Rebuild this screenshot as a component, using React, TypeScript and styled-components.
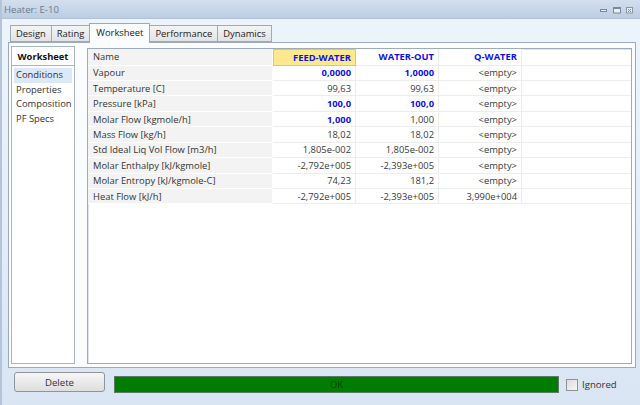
import styled, { createGlobalStyle } from 'styled-components';

const GlobalStyle = createGlobalStyle`
    html, body {
        margin: 0;
        padding: 0;
        background: #dae5f3;
    }
    * {
        box-sizing: border-box;
    }
`;

type Cell = { text: string; spec?: boolean };
type Row = { name: string; cells: Cell[] };

const tabs = ['Design', 'Rating', 'Worksheet', 'Performance', 'Dynamics'];
const navItems = ['Conditions', 'Properties', 'Composition', 'PF Specs'];
const streams = ['FEED-WATER', 'WATER-OUT', 'Q-WATER'];

const rows: Row[] = [
    { name: 'Vapour', cells: [{ text: '0,0000', spec: true }, { text: '1,0000', spec: true }, { text: '<empty>' }] },
    { name: 'Temperature [C]', cells: [{ text: '99,63' }, { text: '99,63' }, { text: '<empty>' }] },
    { name: 'Pressure [kPa]', cells: [{ text: '100,0', spec: true }, { text: '100,0', spec: true }, { text: '<empty>' }] },
    { name: 'Molar Flow [kgmole/h]', cells: [{ text: '1,000', spec: true }, { text: '1,000' }, { text: '<empty>' }] },
    { name: 'Mass Flow [kg/h]', cells: [{ text: '18,02' }, { text: '18,02' }, { text: '<empty>' }] },
    { name: 'Std Ideal Liq Vol Flow [m3/h]', cells: [{ text: '1,805e-002' }, { text: '1,805e-002' }, { text: '<empty>' }] },
    { name: 'Molar Enthalpy [kJ/kgmole]', cells: [{ text: '-2,792e+005' }, { text: '-2,393e+005' }, { text: '<empty>' }] },
    { name: 'Molar Entropy [kJ/kgmole-C]', cells: [{ text: '74,23' }, { text: '181,2' }, { text: '<empty>' }] },
    { name: 'Heat Flow [kJ/h]', cells: [{ text: '-2,792e+005' }, { text: '-2,393e+005' }, { text: '3,990e+004' }] },
];

export default function App() {
    return (
        <>
            <GlobalStyle />
            <Window>
                <TitleBar>
                    <Title>Heater: E-10</Title>
                    <Controls>
                        <svg width="8" height="8" viewBox="0 0 8 8">
                            <rect x="0.5" y="3.5" width="6" height="2" fill="#e9eef4" stroke="#7d8896" />
                        </svg>
                        <svg width="8" height="8" viewBox="0 0 8 8">
                            <rect x="0.5" y="1.5" width="7" height="5.5" fill="#e9eef4" stroke="#7d8896" />
                            <rect x="0.5" y="1.5" width="7" height="1.5" fill="#7d8896" />
                        </svg>
                        <svg width="8" height="8" viewBox="0 0 8 8">
                            <rect x="0.5" y="1.5" width="6" height="5.5" fill="#e9eef4" stroke="#8a95a3" />
                            <path d="M2 3 L5 6 M5 3 L2 6" stroke="#7d8896" strokeWidth="1" />
                        </svg>
                    </Controls>
                </TitleBar>
                <Body>
                    <TabStrip>
                        {tabs.map((t) => (
                            <Tab key={t} $active={t === 'Worksheet'}>{t}</Tab>
                        ))}
                    </TabStrip>
                    <TabPanel>
                        <Nav>
                            <NavHeader>Worksheet</NavHeader>
                            <NavList>
                                {navItems.map((n) => (
                                    <NavItem key={n} $selected={n === 'Conditions'}>{n}</NavItem>
                                ))}
                            </NavList>
                        </Nav>
                        <GridBox>
                            <GridRow $header>
                                <NameCell>Name</NameCell>
                                {streams.map((s, i) => (
                                    <HeadCell key={s} $current={i === 0}>{s}</HeadCell>
                                ))}
                                <FillCell />
                            </GridRow>
                            {rows.map((r) => (
                                <GridRow key={r.name}>
                                    <NameCell>{r.name}</NameCell>
                                    {r.cells.map((c, i) => (
                                        <ValueCell key={i} $spec={c.spec}>{c.text}</ValueCell>
                                    ))}
                                    <FillCell />
                                </GridRow>
                            ))}
                        </GridBox>
                    </TabPanel>
                    <Footer>
                        <Button>Delete</Button>
                        <StatusBar>OK</StatusBar>
                        <CheckLabel>
                            <CheckBox />
                            Ignored
                        </CheckLabel>
                    </Footer>
                </Body>
            </Window>
        </>
    );
}

const Window = styled.div`
    width: 640px;
    height: 405px;
    display: flex;
    flex-direction: column;
    overflow: hidden;

    font-family: "Open Sans", "Noto Sans", sans-serif;
    font-size: 9.4px;
    color: #333333;

    background: linear-gradient(#edf4fc 0%, #e6eff9 45%, #d9e5f3 100%);
    border-left: 2px solid #b4c5da;
`

const TitleBar = styled.div`
    height: 19px;
    flex: none;
    display: flex;
    align-items: center;
    justify-content: space-between;

    padding: 0 6px 0 2px;

    background: linear-gradient(#d3dfee, #bccde3);
    border-bottom: 1px solid #b0c2d9;
`

const Title = styled.span`
    font-size: 9.6px;
    color: #6c7a8c;
    padding-top: 1px;
`

const Controls = styled.div`
    display: flex;
    align-items: center;
    gap: 5px;
    padding-top: 2px;
`

const Body = styled.div`
    flex: 1;
    display: flex;
    flex-direction: column;
    padding: 4px 4px 0 6px;
`

const TabStrip = styled.div`
    display: flex;
    align-items: flex-end;
    height: 19px;
    padding-left: 3px;
    position: relative;
    z-index: 1;
`

const Tab = styled.div<{ $active?: boolean }>`
    height: ${(p) => (p.$active ? '20px' : '17px')};
    margin-left: -1px;
    margin-bottom: ${(p) => (p.$active ? '-1px' : '0')};
    padding: ${(p) => (p.$active ? '0 6px 2px' : '0 5px')};

    display: flex;
    align-items: center;

    font-size: 9.4px;
    color: #222222;

    background: ${(p) => (p.$active ? '#fafcfe' : 'linear-gradient(#f4f4f4, #e1e3e6)')};
    border: 1px solid #9eaaba;
    border-bottom: ${(p) => (p.$active ? 'none' : '1px solid #9eaaba')};
`

const TabPanel = styled.div`
    height: 326px;
    display: flex;
    gap: 12px;
    padding: 3px 3px 3px 2px;

    background: #fafcfe;
    border: 1px solid #9eaaba;
`

const Nav = styled.div`
    width: 64px;
    display: flex;
    flex-direction: column;
`

const NavHeader = styled.div`
    height: 19px;
    display: flex;
    align-items: center;
    justify-content: center;

    font-weight: 700;
    color: #111111;

    background: #ffffff;
    border: 1px solid #a9b5c4;
    border-bottom: none;
`

const NavList = styled.div`
    flex: 1;
    padding: 2px 2px;

    background: #ffffff;
    border: 1px solid #a9b5c4;
`

const NavItem = styled.div<{ $selected?: boolean }>`
    height: 14.7px;
    line-height: 14.7px;
    padding-left: 2px;
    white-space: nowrap;

    color: #333333;
    background: ${(p) => (p.$selected ? '#dbe8f7' : 'transparent')};
`

const GridBox = styled.div`
    flex: 1;
    margin-top: 2px;

    background: #ffffff;
    border: 1px solid #9caab9;
    box-shadow: inset 1px 1px 0 #dfe4ea;
`

const GridRow = styled.div<{ $header?: boolean }>`
    display: grid;
    grid-template-columns: 185px 83px 83px 83px 1fr;
    height: ${(p) => (p.$header ? '16.5px' : '15.44px')};
`

const NameCell = styled.div`
    display: flex;
    align-items: center;
    padding-left: 5px;
    white-space: nowrap;

    color: #333333;
    background: #f3f3f3;
    border-bottom: 1px solid #ffffff;
    border-right: 1px solid #ffffff;
`

const HeadCell = styled.div<{ $current?: boolean }>`
    display: flex;
    align-items: center;
    justify-content: flex-end;
    padding-right: 4px;

    font-weight: 700;
    color: #1010e8;

    background: ${(p) => (p.$current ? '#fce98e' : '#ffffff')};
    border: ${(p) => (p.$current ? '1px solid #e9c85a' : 'none')};
    border-bottom: 1px solid ${(p) => (p.$current ? '#e9c85a' : '#ededed')};
    border-right: 1px solid ${(p) => (p.$current ? '#e9c85a' : '#ededed')};
`

const ValueCell = styled.div<{ $spec?: boolean }>`
    display: flex;
    align-items: center;
    justify-content: flex-end;
    padding-right: 4px;

    font-weight: ${(p) => (p.$spec ? 700 : 400)};
    color: ${(p) => (p.$spec ? '#1010e8' : '#3a3a3a')};

    border-bottom: 1px solid #ededed;
    border-right: 1px solid #ededed;
`

const FillCell = styled.div`
    border-bottom: 1px solid #ededed;
`

const Footer = styled.div`
    display: flex;
    align-items: flex-start;
    padding: 4px 0 0 6px;
`

const Button = styled.div`
    width: 91px;
    height: 20px;
    display: flex;
    align-items: center;
    justify-content: center;

    color: #333333;
    font-size: 9.6px;

    background: linear-gradient(#f6f6f6, #dedede);
    border: 1px solid #8f949a;
    border-radius: 3px;
`

const StatusBar = styled.div`
    width: 445px;
    height: 17px;
    margin: 4px 0 0 9px;
    display: flex;
    align-items: center;
    justify-content: center;

    color: #0b3c0b;
    background: #007c00;
    border: 1px solid #5d7a67;
`

const CheckLabel = styled.div`
    display: flex;
    align-items: center;
    gap: 4px;
    margin: 6px 0 0 7px;

    font-size: 9.6px;
    color: #333333;
`

const CheckBox = styled.div`
    width: 12px;
    height: 12px;
    background: linear-gradient(135deg, #dcdcdc, #f6f6f6);
    border: 1px solid #8e9196;
`
